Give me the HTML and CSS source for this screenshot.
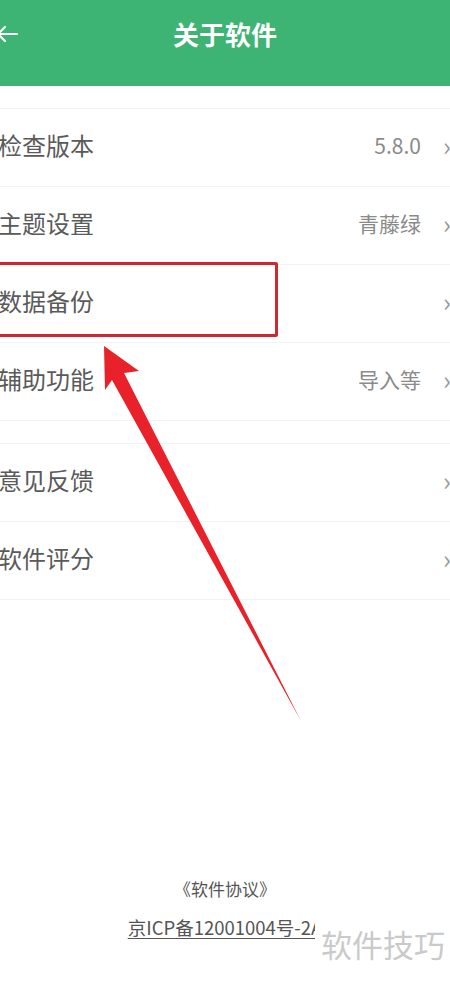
FILE: index.html
```html
<!DOCTYPE html>
<html lang="zh-CN">
<head>
    <meta charset="UTF-8">
    <meta name="viewport" content="width=device-width, initial-scale=1.0">
    <title>关于软件</title>
    <link rel="stylesheet" href="styles.css">
</head>
<body>

<div class="page">
    <header class="top-bar">
        <svg class="back" width="20" height="20" viewBox="0 0 20 20">
            <path d="M-2 10 H17 M5 3 L-2 10 L5 17" fill="none" stroke="#fff" stroke-width="2.2" stroke-linecap="round" stroke-linejoin="round"/>
        </svg>
        <h1>关于软件</h1>
    </header>

    <div class="spacer"></div>
    <div class="menu">
        <div class="row"><span class="label">检查版本</span><span class="value">5.8.0</span><span class="chev">›</span></div>
        <div class="row"><span class="label">主题设置</span><span class="value">青藤绿</span><span class="chev">›</span></div>
        <div class="row"><span class="label">数据备份</span><span class="value"></span><span class="chev">›</span></div>
        <div class="row"><span class="label">辅助功能</span><span class="value">导入等</span><span class="chev">›</span></div>
    </div>

    <div class="spacer"></div>
    <div class="menu">
        <div class="row"><span class="label">意见反馈</span><span class="value"></span><span class="chev">›</span></div>
        <div class="row"><span class="label">软件评分</span><span class="value"></span><span class="chev">›</span></div>
    </div>

    <footer class="footer">
        <div class="agreement">《软件协议》</div>
        <div class="icp">京ICP备12001004号-2A</div>
    </footer>

    <!-- annotation drawn over the screenshot -->
    <div class="highlight"></div>
    <svg class="pointer" width="450" height="981" viewBox="0 0 450 981">
        <polygon points="104,346 139,371 124,373 301,721 112,380 105,390" fill="#e8212b"/>
    </svg>
    <div class="watermark">软件技巧</div>
</div>

</body>
</html>
```

FILE: styles.css
```css
html, body {
    margin: 0;
    padding: 0;
    background-color: #fff;
    overflow: hidden;
}

body {
    font-family: "Noto Sans CJK SC", "Noto Sans", sans-serif;
    color: #555;
}

.page {
    position: relative;
    width: 450px;
    height: 981px;
    display: flex;
    flex-direction: column;
    overflow: hidden;
}

.top-bar {
    height: 86px;
    background-color: #3db374;
    display: flex;
    justify-content: center;
    align-items: flex-start;
    position: relative;
}

.top-bar h1 {
    margin: 0;
    padding-top: 16px;
    font-size: 26px;
    font-weight: bold;
    color: #fff;
    line-height: 36px;
}

.back {
    position: absolute;
    left: 0;
    top: 24px;
}

.spacer {
    height: 22px;
    border-bottom: 1px solid #f3f3f3;
}

.menu {
    margin-left: -2px;
    width: 461px;
}

.row {
    height: 77px;
    display: flex;
    align-items: center;
    border-bottom: 1px solid #f3f3f3;
}

.label {
    font-size: 24px;
    line-height: 30px;
    margin-top: -5px;
    color: #5a5a5a;
    flex: 1;
}

.value {
    font-size: 21px;
    line-height: 28px;
    margin-top: -5px;
    color: #8a8a8a;
}

.chev {
    width: 16px;
    margin-left: 22px;
    font-size: 26px;
    color: #999;
    line-height: 1;
    margin-top: -6px;
}

.footer {
    margin-top: auto;
    padding-bottom: 41px;
    text-align: center;
    font-size: 17px;
    color: #555;
}

.agreement {
    line-height: 22px;
    margin-bottom: 15px;
}

.icp {
    display: inline-block;
    font-size: 18.5px;
    line-height: 22px;
    text-decoration: underline;
    text-underline-offset: 3px;
    color: #555;
}

.highlight {
    position: absolute;
    left: -6px;
    top: 262px;
    width: 278px;
    height: 69px;
    border: 3px solid #cf2833;
    border-radius: 2px;
}

.pointer {
    position: absolute;
    left: 0;
    top: 0;
}

.watermark {
    position: absolute;
    left: 315px;
    top: 921px;
    padding-left: 6px;
    width: 135px;
    height: 46px;
    background-color: #fff;
    font-size: 31px;
    line-height: 46px;
    color: #cacaca;
}
```
